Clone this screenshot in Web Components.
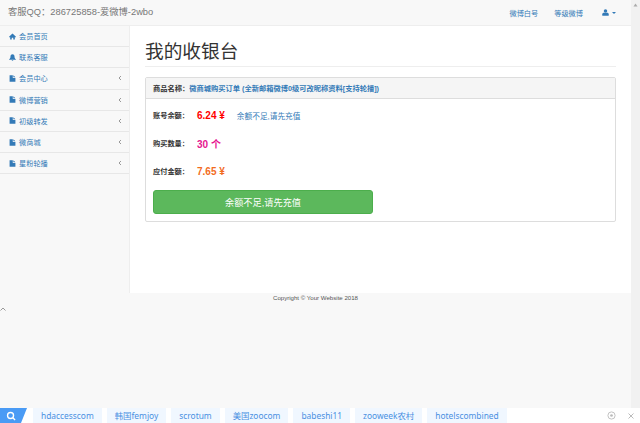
<!DOCTYPE html>
<html lang="zh">
<head>
<meta charset="utf-8">
<title>我的收银台</title>
<style>
html, body { margin: 0; height: 100%; overflow: hidden; background: #f8f8f8; }
body { font: 7.200px "Liberation Sans", "Noto Sans CJK SC", sans-serif; color: #333; }
</style>
</head>
<body>
<app-shell>
  <top-bar slot="top"></top-bar>
  <side-menu slot="side">
    <menu-item icon="home">会员首页</menu-item>
    <menu-item icon="bell">联系客服</menu-item>
    <menu-item icon="file" more>会员中心</menu-item>
    <menu-item icon="file" more>微博营销</menu-item>
    <menu-item icon="file" more>初级转发</menu-item>
    <menu-item icon="file" more>微商城</menu-item>
    <menu-item icon="file" more>星粉轮播</menu-item>
  </side-menu>
  <cash-panel slot="main"></cash-panel>
  <search-strip slot="strip"></search-strip>
</app-shell>

<script>
const ICONS = {
  home: '<path d="M0 6.500 6 1 12 6.500 11 7.500 10 6.700V11H7.300V8H4.700V11H2V6.700L1 7.500Z"/>',
  bell: '<path d="M6 .5C3.500 .5 2.500 2.500 2.500 4.500 2.500 6.800 1.500 8 0 9.300V10H12V9.300C10.500 8 9.500 6.800 9.500 4.500 9.500 2.500 8.500 .5 6 .5ZM4.500 10.500C4.700 11.300 5.300 11.800 6 11.800S7.300 11.300 7.500 10.500Z"/>',
  file: '<path d="M1 .5H6.500V5H11V11.500H1ZM7.500 .5 11 4H7.500Z"/>',
  user: '<circle cx="6" cy="3.500" r="3"/><path d="M.5 11.500V9C.5 7.500 1.800 6.500 3 6.500H9C10.200 6.500 11.500 7.500 11.500 9V11.500Z"/>'
};

class AppShell extends HTMLElement {
  constructor() {
    super();
    this.attachShadow({ mode: 'open' }).innerHTML = `
      <style>
        :host { display: flex; flex-direction: column; height: 423px; width: 640px; position: relative; }
        .top { flex: none; }
        .middle { display: flex; flex: none; height: 267px; margin-right: 9px; }
        .foot { flex: 1; margin-right: 9px; text-align: center; font: 6.100px/9px "Liberation Sans", sans-serif; color: #555; position: relative; }
        .up { position: absolute; left: 0; top: 14px; }
        .scroll { position: absolute; right: 0; top: 0; width: 9px; height: 408px; background: #f1f1f1; }
        .scroll svg { display: block; margin: 3px auto 0; }
        .main { flex: 1; background: #fff; border-left: 1px solid #eee; }
        .side { flex: none; width: 129px; }
      </style>
      <div class="top"><slot name="top"></slot></div>
      <div class="middle">
        <div class="side"><slot name="side"></slot></div>
        <div class="main"><slot name="main"></slot></div>
      </div>
      <div class="foot">Copyright © Your Website 2018
        <svg class="up" width="6" height="4" viewBox="0 0 6 4"><path d="M.5 3.500 3 1 5.500 3.500" fill="none" stroke="#999"/></svg>
      </div>
      <slot name="strip"></slot>
      <div class="scroll"><svg width="5" height="4" viewBox="0 0 5 4"><path d="M2.500 .5 4.500 3.500H.5Z" fill="#aaa"/></svg></div>`;
  }
}

class TopBar extends HTMLElement {
  constructor() {
    super();
    this.attachShadow({ mode: 'open' }).innerHTML = `
      <style>
        :host { display: flex; align-items: center; height: 25px; padding: 0 15px 0 8px; margin-right: 9px; border-bottom: 1px solid #eee; }
        .brand { flex: 1; font: 9.300px/25px "Liberation Sans", "Noto Sans CJK SC", sans-serif; color: #777; }
        nav { display: flex; align-items: center; gap: 16px; font-size: 7.200px; color: #337ab7; }
        .me { display: flex; align-items: center; gap: 3px; margin-left: 3px; }
        .caret { width: 0; height: 0; border: 2px solid transparent; border-top-color: #337ab7; border-bottom: 0; }
        svg { fill: #337ab7; display: block; }
      </style>
      <div class="brand">客服QQ：286725858-爱微博-2wbo</div>
      <nav>
        <span>微博白号</span>
        <span>等级微博</span>
        <span class="me"><svg width="7" height="7" viewBox="0 0 12 12">${ICONS.user}</svg><i class="caret"></i></span>
      </nav>`;
  }
}

class SideMenu extends HTMLElement {
  constructor() {
    super();
    this.attachShadow({ mode: 'open' }).innerHTML = `
      <style>:host { display: block; }</style>
      <slot></slot>`;
  }
}

class MenuItem extends HTMLElement {
  constructor() {
    super();
    const more = this.hasAttribute('more');
    this.attachShadow({ mode: 'open' }).innerHTML = `
      <style>
        :host { display: flex; align-items: center; gap: 3px; height: 21.200px; padding: 0 7px 0 9px; box-sizing: border-box; border-bottom: 1px solid #e7e7e7; color: #337ab7; font-size: 7.200px; }
        svg { fill: #337ab7; flex: none; }
        :host([icon="bell"]) svg:first-child { transform: translateX(.5px) scale(1.2); }
        .text { flex: 1; }
        .arrow { fill: none; stroke: #999; }
      </style>
      <svg width="7" height="7" viewBox="0 0 12 12">${ICONS[this.getAttribute('icon')]}</svg>
      <span class="text"><slot></slot></span>
      ${more ? '<svg class="arrow" width="4" height="6" viewBox="0 0 4 6"><path d="M3 1 1 3 3 5"/></svg>' : ''}`;
  }
}

class CashPanel extends HTMLElement {
  constructor() {
    super();
    this.attachShadow({ mode: 'open' }).innerHTML = `
      <style>
        :host { display: block; padding: 0 15px; }
        h1 { margin: 0; padding: 14px 0 2px; font: 400 18.700px/24px "Liberation Sans", "Noto Sans CJK SC", sans-serif; color: #333; border-bottom: 1px solid #eee; }
        .panel { margin-top: 10px; border: 1px solid #ddd; border-radius: 2px; }
        .head { display: flex; align-items: center; height: 20px; padding: 0 7px; background: #f5f5f5; border-bottom: 1px solid #ddd; font-size: 7.250px; font-weight: 700; }
        .head a { color: #337ab7; }
        .body { padding: 2px 7px 7px; }
        .row { display: flex; align-items: center; height: 28px; font-size: 7.200px; font-weight: 700; }
        .label { width: 44px; }
        .val { font-size: 10px; }
        .red { color: #f00; }
        .pink { color: #e6158f; }
        .orange { color: #f26c1e; }
        .tip { margin-left: 12px; color: #337ab7; font-size: 7.700px; font-weight: 400; }
        button { display: block; width: 220px; height: 24px; margin-top: 5px; border: 1px solid #4cae4c; border-radius: 3px; background: #5cb85c; color: #fff; font: 9.200px "Liberation Sans", "Noto Sans CJK SC", sans-serif; }
      </style>
      <h1>我的收银台</h1>
      <div class="panel">
        <div class="head">商品名称：<a>微商城购买订单 (全新邮箱微博0级可改昵称资料[支持轮播])</a></div>
        <div class="body">
          <div class="row"><span class="label">账号余额：</span><span class="val red">6.24 ¥</span><span class="tip">余额不足,请先充值</span></div>
          <div class="row"><span class="label">购买数量：</span><span class="val pink">30 个</span></div>
          <div class="row"><span class="label">应付金额：</span><span class="val orange">7.65 ¥</span></div>
          <button>余额不足,请先充值</button>
        </div>
      </div>`;
  }
}

class SearchStrip extends HTMLElement {
  constructor() {
    super();
    const words = ['hdaccesscom', '韩国femjoy', 'scrotum', '美国zoocom', 'babeshi11', 'zooweek农村', 'hotelscombined'];
    this.attachShadow({ mode: 'open' }).innerHTML = `
      <style>
        :host { display: flex; align-items: center; height: 15px; background: #fff; font: 8.400px "Noto Sans", "Noto Sans CJK SC", sans-serif; color: #4a90e2; flex: none; }
        .go { flex: none; width: 27px; height: 15px; background: #4a9bf5; clip-path: polygon(0 0, 100% 0, 21px 100%, 0 100%); display: flex; align-items: center; padding-left: 6px; box-sizing: border-box; }
        .tags { display: flex; gap: 5px; margin-left: 6px; flex: 1; }
        .tags span { background: #f0f7ff; padding: 0 8px; line-height: 15px; }
        .end { display: flex; gap: 11px; align-items: center; margin-right: 5px; }
      </style>
      <div class="go"><svg width="10" height="10" viewBox="0 0 11 11" fill="none" stroke="#fff" stroke-width="1.500"><circle cx="5" cy="5" r="3.300"/><path d="M7.500 7.500 10 10"/></svg></div>
      <div class="tags">${words.map(w => `<span>${w}</span>`).join('')}</div>
      <div class="end">
        <svg width="9" height="9" viewBox="0 0 10 10" fill="none" stroke="#bbb"><circle cx="5" cy="5" r="4"/><circle cx="5" cy="5" r="1.500" fill="#bbb" stroke="none"/></svg>
        <svg width="8" height="8" viewBox="0 0 8 8" fill="none" stroke="#bbb"><path d="M1.500 1.500 6.500 6.500M6.500 1.500 1.500 6.500"/></svg>
      </div>`;
  }
}

customElements.define('app-shell', AppShell);
customElements.define('top-bar', TopBar);
customElements.define('side-menu', SideMenu);
customElements.define('menu-item', MenuItem);
customElements.define('cash-panel', CashPanel);
customElements.define('search-strip', SearchStrip);
</script>
</body>
</html>
